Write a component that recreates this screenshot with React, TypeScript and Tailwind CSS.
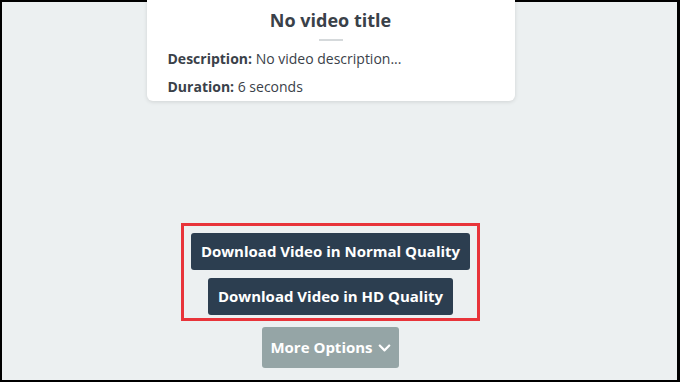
export default function App() {
  return (
    <div className="h-[382px] w-[680px] overflow-hidden bg-black p-[2px] pr-[3px]">
      <div className="flex h-full w-full flex-col items-center bg-[#ecf0f1] pr-[18px] font-['Open_Sans',sans-serif]">
        <div className="mt-[-20px] w-[368px] rounded-b-md bg-white px-[21px] pb-[4px] pt-[26px] shadow-[0_1px_4px_rgba(0,0,0,0.12)]">
          <h2 className="text-center text-[18px] font-bold leading-[24px] text-[#3a4149]">No video title</h2>
          <div className="mx-auto mt-[7px] h-[2px] w-[24px] bg-[#d5d9db]" />
          <p className="mt-[8px] text-[14px] leading-[20px] text-[#3a4149]">
            <span className="font-bold">Description:</span> No video description...
          </p>
          <p className="mt-[8px] text-[14px] leading-[20px] text-[#3a4149]">
            <span className="font-bold">Duration:</span> 6 seconds
          </p>
        </div>

        <div className="mt-[122px] flex flex-col items-center gap-[8px] border-[3px] border-[#e8343a] px-[7px] pb-[3px] pt-[7px]">
          <button className="h-[37px] rounded-[3px] bg-[#2c3e50] px-[10px] text-[15px] font-bold text-white">
            Download Video in Normal Quality
          </button>
          <button className="h-[37px] rounded-[3px] bg-[#2c3e50] px-[10px] text-[15px] font-bold text-white">
            Download Video in HD Quality
          </button>
        </div>

        <button className="mt-[6px] flex h-[41px] w-[137px] items-center justify-center gap-[5px] rounded-[3px] bg-[#95a5a6] text-[15px] font-bold text-white">
          More Options
          <svg viewBox="0 0 448 512" className="h-[14px] w-[13px]" fill="currentColor">
            <path d="M207.029 381.476L12.686 187.132c-9.373-9.373-9.373-24.569 0-33.941l22.667-22.667c9.357-9.357 24.522-9.375 33.901-.04L224 284.505l154.745-154.021c9.379-9.335 24.544-9.317 33.901.04l22.667 22.667c9.373 9.373 9.373 24.569 0 33.941L240.971 381.476c-9.373 9.372-24.569 9.372-33.942 0z" />
          </svg>
        </button>
      </div>
    </div>
  );
}
